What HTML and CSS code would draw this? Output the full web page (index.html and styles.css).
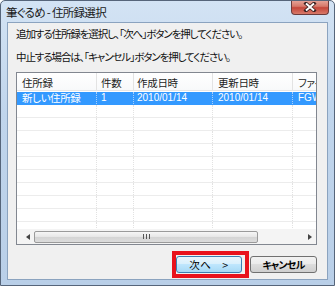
FILE: index.html
```html
<!DOCTYPE html>
<html lang="ja">
<head>
<meta charset="utf-8">
<link rel="stylesheet" href="styles.css">
</head>
<body>
<div class="window">
  <div class="titlebar">
    <span class="title">筆ぐるめ - 住所録選択</span>
    <span class="close"><svg width="14" height="10" viewBox="0 0 14 10"><path d="M3 1.5 L11 8.5 M11 1.5 L3 8.5" stroke="#3a2020" stroke-width="3.6" stroke-linecap="square"/><path d="M3 1.5 L11 8.5 M11 1.5 L3 8.5" stroke="#fff" stroke-width="2"/></svg></span>
  </div>
  <div class="client">
    <p class="msg first">追加する住所録を選択し、「次へ」ボタンを押してください。</p>
    <p class="msg">中止する場合は、「キャンセル」ボタンを押してください。</p>
    <div class="list">
      <div class="row head">
        <div class="c c1">住所録</div><div class="c c2">件数</div><div class="c c3">作成日時</div><div class="c c4">更新日時</div><div class="c c5">ファイル名</div>
      </div>
      <div class="rows">
        <div class="row sel">
          <div class="c c1 jp">新しい住所録</div><div class="c c2">1</div><div class="c c3">2010/01/14</div><div class="c c4">2010/01/14</div><div class="c c5">FGWファイル</div>
        </div>
        <div class="row"><div class="c c1"></div><div class="c c2"></div><div class="c c3"></div><div class="c c4"></div><div class="c c5"></div></div>
        <div class="row"><div class="c c1"></div><div class="c c2"></div><div class="c c3"></div><div class="c c4"></div><div class="c c5"></div></div>
        <div class="row"><div class="c c1"></div><div class="c c2"></div><div class="c c3"></div><div class="c c4"></div><div class="c c5"></div></div>
        <div class="row"><div class="c c1"></div><div class="c c2"></div><div class="c c3"></div><div class="c c4"></div><div class="c c5"></div></div>
        <div class="row"><div class="c c1"></div><div class="c c2"></div><div class="c c3"></div><div class="c c4"></div><div class="c c5"></div></div>
        <div class="row"><div class="c c1"></div><div class="c c2"></div><div class="c c3"></div><div class="c c4"></div><div class="c c5"></div></div>
        <div class="row"><div class="c c1"></div><div class="c c2"></div><div class="c c3"></div><div class="c c4"></div><div class="c c5"></div></div>
        <div class="row"><div class="c c1"></div><div class="c c2"></div><div class="c c3"></div><div class="c c4"></div><div class="c c5"></div></div>
        <div class="row"><div class="c c1"></div><div class="c c2"></div><div class="c c3"></div><div class="c c4"></div><div class="c c5"></div></div>
        <div class="row"><div class="c c1"></div><div class="c c2"></div><div class="c c3"></div><div class="c c4"></div><div class="c c5"></div></div>
      </div>
      <div class="hscroll">
        <span class="arrow"><svg width="4" height="6" viewBox="0 0 4 6"><path d="M4 0 L0 3 L4 6Z" fill="#444"/></svg></span>
        <div class="track">
          <div class="thumb"><svg width="7" height="5" viewBox="0 0 7 5"><path d="M0.5 0V5M3.5 0V5M6.5 0V5" stroke="#555" stroke-width="1"/></svg></div>
        </div>
        <span class="arrow"><svg width="4" height="6" viewBox="0 0 4 6"><path d="M0 0 L4 3 L0 6Z" fill="#444"/></svg></span>
      </div>
    </div>
    <div class="buttons">
      <div class="highlight"><button class="btn next">次へ　&gt;</button></div>
      <button class="btn cancel">キャンセル</button>
    </div>
  </div>
</div>
</body>
</html>
```

FILE: styles.css
```css
* { box-sizing: border-box; }
html, body { margin: 0; padding: 0; background: #fff; }
body {
  font-family: "Noto Sans CJK JP", "DejaVu Sans", sans-serif;
  font-size: 11px;
  color: #000;
}
.window {
  width: 335px;
  height: 286px;
  border: 1px solid #56657a;
  border-radius: 5px 5px 0 0;
  background: linear-gradient(180deg, #d3e3f4 0%, #c0d5ec 40%, #b9cfe8 100%);
  display: flex;
  flex-direction: column;
  overflow: hidden;
}
.titlebar {
  height: 21px;
  display: flex;
  justify-content: space-between;
  align-items: flex-start;
  padding-left: 5px;
  padding-right: 5px;
}
.title {
  font-size: 11.5px;
  line-height: 12px;
  margin-top: 5px;
  color: #1a1a1a;
  font-feature-settings: "palt";
  letter-spacing: -0.7px;
}
.close {
  width: 38px;
  height: 15px;
  margin-top: -1px;
  border: 1px solid #6c3b3b;
  border-top: none;
  border-radius: 0 0 4px 4px;
  background: linear-gradient(180deg, #e8a99e 0%, #d6786a 45%, #c4463a 55%, #d87a6a 100%);
  display: flex;
  align-items: center;
  justify-content: center;
}
.client {
  margin: 0 6px 0 6px;
  height: 258px;
  border: 1px solid #8ba3bf;
  background: #f0f0f0;
  padding: 0 10px 0 8px;
}
.msg {
  margin: 0;
  height: 21px;
  line-height: 21px;
  font-size: 10.5px;
  font-feature-settings: "palt";
  white-space: nowrap;
  letter-spacing: -1.1px;
  color: #111;
}
.msg + .msg { margin-top: 2px; }
.list {
  margin-top: 5px;
  width: 301px;
  height: 173px;
  border: 1px solid #828790;
  background: #fff;
  display: flex;
  flex-direction: column;
  overflow: hidden;
}
.row {
  display: flex;
  height: 13px;
  border-bottom: 1px solid #ececec;
  flex: none;
}
.rows {
  flex: 1;
  overflow: hidden;
}
.c {
  flex: none;
  overflow: hidden;
  white-space: nowrap;
  padding-left: 5px;
  border-right: 1px dotted #e2e2e2;
  font-size: 11px;
  line-height: 13px;
}
.c1 { width: 80px; overflow: visible; }
.c2 { width: 37px; padding-left: 4px; }
.c3 { width: 79px; padding-left: 3px; }
.c4 { width: 80px; }
.c5 { width: 40px; border-right: none; }
.head {
  height: 18px;
  border-bottom: 1px solid #e5e5e5;
  background: linear-gradient(180deg, #ffffff 0%, #f8f9fa 100%);
}
.head .c {
  line-height: 19px;
  border-right: 1px solid #e3e3e3;
  color: #1e1e1e;
  font-size: 10.5px;
  font-feature-settings: "palt";
  letter-spacing: -0.3px;
}
.head .c5 { border-right: none; }
.sel {
  background: #3399ff;
  color: #fff;
  margin-top: 1px;
  border-bottom-color: #3399ff;
}
.sel .c {
  border-right: 1px dotted #a8d0fb;
  font-family: "Liberation Sans", "DejaVu Sans", sans-serif;
  font-size: 10px;
  line-height: 12px;
  letter-spacing: 0;
}
.sel .c.jp {
  font-family: "Noto Sans CJK JP", sans-serif;
  font-size: 10.5px;
  line-height: 12px;
  font-feature-settings: "palt";
  letter-spacing: -0.4px;
  overflow: visible;
}
.hscroll {
  height: 15px;
  flex: none;
  display: flex;
  align-items: center;
  background: #f4f4f4;
  padding: 0 2px 0 6px;
}
.arrow {
  width: 9px;
  display: flex;
  justify-content: center;
  flex: none;
}
.track {
  flex: 1;
  height: 12px;
  padding-left: 2px;
  padding-right: 47px;
}
.thumb {
  height: 12px;
  border: 1px solid #9a9a9a;
  border-radius: 2px;
  background: linear-gradient(180deg, #f6f6f6 0%, #e6e6e6 50%, #d4d4d4 51%, #dcdcdc 100%);
  display: flex;
  align-items: center;
  justify-content: center;
}
.buttons {
  margin-top: 6px;
  display: flex;
  justify-content: flex-end;
  align-items: center;
  width: 301px;
  gap: 1px;
}
.highlight {
  width: 77px;
  height: 27px;
  border: 4px solid #e8121c;
  display: flex;
  align-items: center;
}
.btn {
  font-family: "Noto Sans CJK JP", sans-serif;
  font-size: 11px;
  line-height: 14px;
  height: 17px;
  padding: 0;
  border-radius: 3px;
  color: #000;
}
.next {
  width: 66px;
  border: 1px solid #3c7fb1;
  background: linear-gradient(180deg, #eaf6fd 0%, #d9f0fc 45%, #bee6fd 50%, #a7d9f5 100%);
  letter-spacing: 0.5px;
  font-size: 10.5px;
}
.cancel {
  width: 67px;
  border: 1px solid #707070;
  background: linear-gradient(180deg, #f2f2f2 0%, #ebebeb 45%, #dddddd 50%, #cfcfcf 100%);
  font-weight: bold;
  font-size: 10px;
  letter-spacing: -0.8px;
  font-feature-settings: "palt";
}
```
